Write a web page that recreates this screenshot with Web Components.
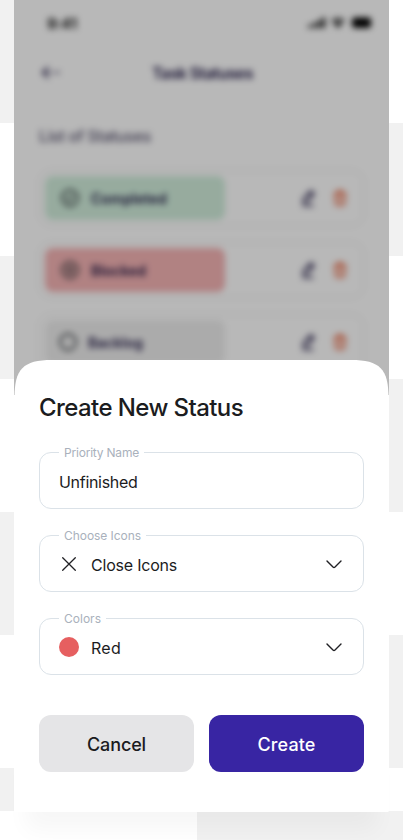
<!DOCTYPE html>
<html lang="en">
<head>
<meta charset="utf-8">
<title>Create New Status</title>
<style>
html,body{margin:0;height:100%}
body{font-family:Inter,"Liberation Sans",sans-serif;overflow:hidden;background:#fff}
</style>
</head>
<body>
<status-app></status-app>
<script>
const define=(name,html,after)=>{
  const t=document.createElement('template');
  t.innerHTML=html;
  customElements.define(name,class extends HTMLElement{
    constructor(){super();this.attachShadow({mode:'open'}).append(t.content.cloneNode(true));}
    connectedCallback(){if(after)after.call(this,this.shadowRoot);}
  });
};

/* One line of text, tracked so that it fills the width given in px. */
define('tracked-text',`<style>:host{display:inline-block;white-space:pre}</style><span></span>`,function(root){
  const s=root.querySelector('span');
  s.textContent=this.getAttribute('text');
  const gap=(+this.getAttribute('w')-s.getBoundingClientRect().width)/s.textContent.length;
  s.style.letterSpacing=gap.toFixed(3)+'px';
});

define('edit-icon',`<style>:host{display:block;width:18px;height:18px}svg{display:block}</style>
<svg width="18" height="18" viewBox="0 0 18 18" fill="none" stroke="#1b1340" stroke-width="1.7" stroke-linecap="round" stroke-linejoin="round"><path d="M11 2.7 4.8 9.3l-.7 4.2 4.2-.9L14 6.2c1.7-2.4-.8-5-3-3.5ZM9.7 4.2l2.9 3M4 16.600h10"/></svg>`);

define('trash-icon',`<style>:host{display:block;width:18px;height:18px}svg{display:block}</style>
<svg width="18" height="18" viewBox="0 0 18 18" fill="none" stroke="#e8643f" stroke-width="1.8" stroke-linecap="round" stroke-linejoin="round"><path d="M3.500 4.500h11M6.500 4l.5-2h4l.5 2M4 5l.7 9.500q.2 1.900 2 1.900h4.600q1.800 0 2-1.900L14 5M7.500 12.300h3M7 8.700h4"/></svg>`);

define('status-row',`<style>
:host{display:flex;box-sizing:border-box;height:56px;padding:5px;border:1px solid #e4e4e4;border-radius:12px;align-items:center}
.tile{display:flex;align-items:center;gap:var(--gap,11px);width:180px;height:44px;border-radius:8px;background:var(--tile);box-sizing:border-box;padding-left:var(--pad,15px);color:#1b1340;font-size:14px;font-weight:600}
.tools{display:flex;gap:14px;margin-left:auto;padding-right:9px}
svg{display:block}
</style><div class="tile"><slot></slot></div><div class="tools"><edit-icon></edit-icon><trash-icon></trash-icon></div>`);

define('status-bar',`<style>
:host{display:flex;height:44px;box-sizing:border-box;padding:2px 16px 0 33px;align-items:center;justify-content:space-between;font-size:15px;font-weight:600;color:#000}
svg{display:block}
</style><tracked-text text="9:41" w="30"></tracked-text>
<svg width="67" height="14" viewBox="0 0 67 14"><path d="M2 9h3v3H2zM6.700 7h3v5h-3zM11.400 4.500h3V12h-3zM16 1.500h3V12h-3z"/><path d="M25 4.500a11 11 0 0 1 14 0l-1.500 1.800a9 9 0 0 0-11 0zM27.800 7.500a7 7 0 0 1 8.400 0L32 12z"/><rect x="46" y="1.500" width="19" height="10.500" rx="3"/></svg>`);

define('task-page',`<style>
:host{display:block;background:#fff;filter:blur(3px)}
header{display:grid;grid-template-columns:1fr auto 1fr;align-items:center;height:58px;padding:0 24px 0 26px;font-size:16px;font-weight:600;color:#1b1340}
main{display:flex;flex-direction:column;gap:16px;padding:0 25px}
h2{box-sizing:border-box;margin:0;height:60px;padding-top:24px;font-size:16px;line-height:21px;font-weight:500;color:#5a5570}
svg{display:block}
status-row:first-of-type{margin-top:-8px}
</style>
<status-bar></status-bar>
<header><svg width="24" height="24" viewBox="0 0 24 24" fill="none" stroke="#1b1340" stroke-width="1.500" stroke-linecap="round" stroke-linejoin="round"><path d="M8 6 2.500 11.500 8 17M3 11.500H11M15 11.500H19"/></svg><tracked-text text="Task Statuses" w="101"></tracked-text></header>
<main>
<h2><tracked-text text="List of Statuses" w="112"></tracked-text></h2>
<status-row style="--tile:#d1eedc"><svg width="20" height="20" viewBox="0 0 20 20" fill="none" stroke="#30353a" stroke-width="1.800"><circle cx="10" cy="10" r="8"/><path d="m6.500 10 2.500 2.500 4.500-5"/></svg><tracked-text text="Completed" w="76"></tracked-text></status-row>
<status-row style="--tile:#f5b4b5"><svg width="20" height="20" viewBox="0 0 20 20" fill="none" stroke="#30353a" stroke-width="1.800"><circle cx="10" cy="10" r="8"/><path d="m7 7 6 6m0-6-6 6"/></svg><tracked-text text="Blocked" w="55"></tracked-text></status-row>
<status-row style="--tile:#eee;--pad:13px;--gap:10px"><svg width="20" height="20" viewBox="0 0 20 20" fill="none" stroke="#30353a" stroke-width="1.800"><circle cx="10" cy="10" r="8"/></svg><tracked-text text="Backlog" w="55"></tracked-text></status-row>
</main>`);

define('form-field',`<style>
:host{display:block}
fieldset{box-sizing:border-box;height:65px;margin:0;padding:0 20px 0 19px;border:1px solid #dbe2e8;border-radius:12px;min-width:0}
legend{box-sizing:border-box;height:16px;line-height:14px;padding:2px 5px 0;font-size:12px;color:#a9b1bc}
.value{display:flex;align-items:center;height:42px;margin-top:1px;font-size:16px;color:#1c1c1e}
.chevron{margin-left:auto;display:none}
:host([select]) .chevron{display:block}
</style>
<fieldset><legend><slot name="label"></slot></legend>
<div class="value"><slot></slot><svg class="chevron" width="18" height="18" viewBox="0 0 18 18" fill="none" stroke="#202024" stroke-width="1.400" stroke-linecap="round" stroke-linejoin="round"><path d="m2 5 6 6.100q1 .9 2 0L16 5"/></svg></div></fieldset>`);

define('action-button',`<style>
:host{display:flex;flex:1;height:57px}
button{all:unset;flex:1;display:flex;align-items:center;justify-content:center;border-radius:12px;background:#e5e5e7;color:#1b1b1e;font-size:18px;font-weight:500;padding-top:2px;box-sizing:border-box}
:host([primary]) button{background:#3825a3;color:#fff}
</style><button><slot></slot></button>`);

define('bottom-sheet',`<style>
:host{display:block;box-sizing:border-box;width:375px;height:452px;padding:32px 25px 0;position:relative;isolation:isolate}
:host::before{content:"";position:absolute;inset:0;z-index:-1;background:#fff;clip-path:path("M.5 452V38C.5 9 9 0 38 0H337C366 0 374.500 9 374.500 38V452Z")}
:host::after{content:"";position:absolute;inset:400px 20px 0;z-index:-2;box-shadow:0 10px 22px 8px #00000009}
h1{margin:0 0 20px;height:32px;line-height:32px;font-size:24px;font-weight:500;color:#1b1c20}
.fields{display:grid;gap:18px}
.actions{display:flex;gap:15px;margin-top:40px}
.x{margin:0 12px 3px 0}
.dot{width:20px;height:20px;border-radius:50%;background:#e65f60;margin:0 12px 3px 0}
</style>
<h1><tracked-text text="Create New Status" w="204"></tracked-text></h1>
<div class="fields">
<form-field><tracked-text slot="label" text="Priority Name" w="75"></tracked-text><tracked-text text="Unfinished" w="78.500"></tracked-text></form-field>
<form-field select><tracked-text slot="label" text="Choose Icons" w="77"></tracked-text><svg class="x" width="20" height="20" viewBox="0 0 20 20" stroke="#202024" stroke-width="1.300" stroke-linecap="round"><path d="m3.700 3.700 12.600 12.600m0-12.600L3.700 16.300"/></svg><tracked-text text="Close Icons" w="86"></tracked-text></form-field>
<form-field select><tracked-text slot="label" text="Colors" w="37"></tracked-text><span class="dot"></span><tracked-text text="Red" w="30"></tracked-text></form-field>
</div>
<div class="actions"><action-button><tracked-text text="Cancel" w="59"></tracked-text></action-button><action-button primary><tracked-text text="Create" w="58"></tracked-text></action-button></div>`);

define('status-app',`<style>
:host{display:grid;width:403px;height:840px;grid-template-columns:14px 375px 14px;grid-template-rows:811px 29px}
.edge{background:repeating-linear-gradient(#f1f1f1 0 123px,#fff 123px 256px)}
.edge.alt{background:repeating-linear-gradient(#fff 0 123px,#f1f1f1 123px 256px)}
.foot{grid-row:2;grid-column:1/-1;background:linear-gradient(90deg,#fff 197px,#f1f1f1 197px)}
.phone{grid-row:1;grid-column:2;display:grid;min-height:0}
.back{grid-area:1/1;height:395px;overflow:hidden;position:relative;background:#fff}
.back::after{content:"";position:absolute;inset:0;background:#00000047}
bottom-sheet{grid-area:1/1;margin-top:360px}
</style>
<div class="edge"></div>
<div class="foot"></div>
<div class="phone"><div class="back"><task-page></task-page></div><bottom-sheet></bottom-sheet></div>
<div class="edge alt" style="grid-row:1;grid-column:3"></div>`);
</script>
</body>
</html>
